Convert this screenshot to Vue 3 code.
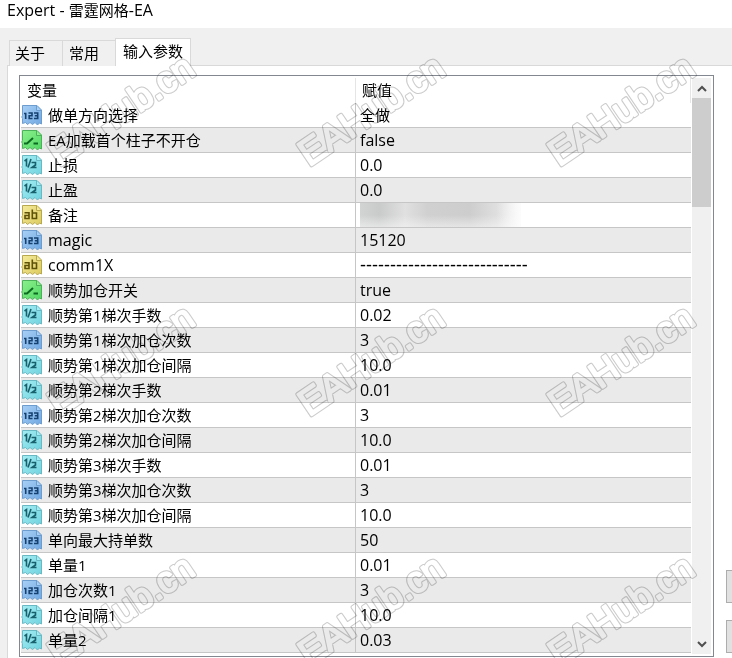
<script setup>
const tabs = ['关于', '常用', '输入参数']
const active = '输入参数'

const rows = [
  ['int', '做单方向选择', '全做'],
  ['bool', 'EA加载首个柱子不开仓', 'false'],
  ['real', '止损', '0.0'],
  ['real', '止盈', '0.0'],
  ['text', '备注', null],
  ['int', 'magic', '15120'],
  ['text', 'comm1X', '----------------------------'],
  ['bool', '顺势加仓开关', 'true'],
  ['real', '顺势第1梯次手数', '0.02'],
  ['int', '顺势第1梯次加仓次数', '3'],
  ['real', '顺势第1梯次加仓间隔', '10.0'],
  ['real', '顺势第2梯次手数', '0.01'],
  ['int', '顺势第2梯次加仓次数', '3'],
  ['real', '顺势第2梯次加仓间隔', '10.0'],
  ['real', '顺势第3梯次手数', '0.01'],
  ['int', '顺势第3梯次加仓次数', '3'],
  ['real', '顺势第3梯次加仓间隔', '10.0'],
  ['int', '单向最大持单数', '50'],
  ['real', '单量1', '0.01'],
  ['int', '加仓次数1', '3'],
  ['real', '加仓间隔1', '10.0'],
  ['real', '单量2', '0.03'],
].map(([type, name, value]) => ({ type, name, value }))

const palette = {
  int: { light: '#a9d0f5', dark: '#6fa8e3', edge: '#6d9dce', ink: '#15406f' },
  bool: { light: '#8df08d', dark: '#4fd763', edge: '#4bb25a', ink: '#0b6a20' },
  real: { light: '#a5edf3', dark: '#6fd3df', edge: '#68b9c4', ink: '#17606c' },
  text: { light: '#f4ea9c', dark: '#dccb5c', edge: '#b9a94e', ink: '#5e5208' },
}

const isLatin = (s) => s !== null && /^[\x20-\x7e]+$/.test(s)
const isRule = (s) => s !== null && /^-+$/.test(s)

const marks = []
for (const y of [167, 417, 667]) for (const x of [59, 309, 559]) marks.push({ x, y })
</script>

<template>
  <div class="window">
    <header class="title"><span class="latin">Expert - </span>雷霆网格<span class="latin">-EA</span></header>

    <nav class="tabs" role="tablist">
      <button
        v-for="t in tabs"
        :key="t"
        type="button"
        role="tab"
        class="tab"
        :class="{ active: t === active }"
        :aria-selected="t === active"
      >{{ t }}</button>
    </nav>

    <main class="page">
      <section class="list">
        <table>
          <thead>
            <tr><th>变量</th><th>赋值</th></tr>
          </thead>
          <tbody>
            <tr v-for="r in rows" :key="r.name">
              <td>
                <div class="name">
                  <svg class="icon" viewBox="0 0 22 22" aria-hidden="true">
                    <defs>
                      <linearGradient :id="'g-' + r.type" x1="0" y1="0" x2="1" y2="1">
                        <stop offset="0" :stop-color="palette[r.type].light" />
                        <stop offset="1" :stop-color="palette[r.type].dark" />
                      </linearGradient>
                    </defs>
                    <path
                      d="M1.5 1.5H16L20.5 6V20L18.500 19L16.500 21L14 18.500L11.500 20.500L9 18.500L6.500 20.500L4.500 18.500L1.500 19.500V14.500L.8 13L1.500 11.500Z"
                      :fill="`url(#g-${r.type})`"
                      :stroke="palette[r.type].edge"
                    />
                    <path d="M15.500 2V6.500H20" :fill="palette[r.type].light" :stroke="palette[r.type].edge" />
                    <g fill="none" :stroke="palette[r.type].ink" stroke-width="1.600">
                      <path v-if="r.type === 'bool'" d="M3 14.500H6L12 9M12.500 14.500H17" stroke-width="2" />
                      <path v-if="r.type === 'real'" d="M3.500 7L5.500 5.500V12.500M10 5L7 13.500M10.500 8.500H14.500V11L11 13.500H15.500" />
                      <path v-if="r.type === 'int'" d="M3 9.500H4.700V15M7.500 9H11V11.800H8.200V14.500H11.500M13 9H16.700V14.500H13M13.800 11.800H16.500" />
                      <path v-if="r.type === 'text'" d="M3.500 8.800H8V14.500H4V11.500H8M11.300 5.500V14.500H15.500V9H11.300" />
                    </g>
                  </svg>
                  <span :class="{ latin: isLatin(r.name) }">{{ r.name }}</span>
                </div>
              </td>
              <td>
                <div v-if="r.value === null" class="masked"></div>
                <span v-else :class="{ latin: isLatin(r.value), rule: isRule(r.value) }">{{ r.value }}</span>
              </td>
            </tr>
          </tbody>
        </table>

        <div class="scroll">
          <button type="button" class="arrow" aria-label="向上滚动">
            <svg viewBox="0 0 10 7" aria-hidden="true"><path d="M1 6L5 2L9 6" /></svg>
          </button>
          <div class="track"><div class="thumb"></div></div>
          <button type="button" class="arrow" aria-label="向下滚动">
            <svg viewBox="0 0 10 7" aria-hidden="true"><path d="M1 1L5 5L9 1" /></svg>
          </button>
        </div>
      </section>

      <aside class="side">
        <button type="button" class="action" aria-label="加载"></button>
        <button type="button" class="action" aria-label="保存"></button>
      </aside>
    </main>

    <svg class="watermark" aria-hidden="true">
      <defs>
        <mask id="outline" maskUnits="userSpaceOnUse" x="0" y="0" width="100%" height="100%">
          <g v-for="(m, i) in marks" :key="i" :transform="`translate(${m.x} ${m.y}) rotate(-34)`">
            <text class="mark outer">EAHub.cn</text>
            <text class="mark inner">EAHub.cn</text>
          </g>
        </mask>
      </defs>
      <rect width="100%" height="100%" mask="url(#outline)" />
    </svg>
  </div>
</template>

<style>
body {
  margin: 0;
}
</style>

<style scoped>
.window {
  position: relative;
  display: flex;
  flex-direction: column;
  height: 100vh;
  overflow: hidden;
  background: #f0f0f0;
  color: #000;
  font-family: "Open Sans", "Noto Sans CJK SC", sans-serif;
  font-size: 15px;
  line-height: 24px;
}
button {
  margin: 0;
  padding: 0;
  border: 0;
  font: inherit;
  color: inherit;
}
.title {
  flex: none;
  height: 28px;
  padding-left: 7px;
  background: #fff;
  line-height: 20px;
  white-space: pre;
}
.tabs {
  position: relative;
  z-index: 1;
  flex: none;
  display: flex;
  align-items: flex-end;
  height: 38px;
  padding-left: 9px;
}
.tab {
  box-sizing: border-box;
  height: 26px;
  padding: 0 17px 2px 5px;
  border: 1px solid #d9d9d9;
  border-right: 0;
  border-bottom: 0;
  background: #f0f0f0;
  line-height: 22px;
}
.tab + .tab {
  padding-left: 6px;
  padding-right: 16px;
}
.tab.active {
  height: 28px;
  padding: 0 7px 4px;
  border-right: 1px solid #d9d9d9;
  background: #fff;
}
.page {
  flex: 1;
  display: flex;
  align-items: flex-start;
  margin: -1px 0 0 7px;
  padding: 9px 0 0 11px;
  border-top: 1px solid #d9d9d9;
  border-left: 1px solid #d9d9d9;
  background: #fff;
}
.list {
  flex: 1;
  display: flex;
  padding: 2px 2px 2px 1px;
  border: 1px solid #828790;
}
table {
  flex: 1;
  table-layout: fixed;
  border-collapse: separate;
  border-spacing: 0;
  margin-bottom: 1px;
}
th,
td {
  box-sizing: border-box;
  width: 50%;
  height: 25px;
  padding: 0 0 0 4px;
  font-weight: 400;
  text-align: left;
  white-space: nowrap;
}
th {
  padding-left: 6px;
  padding-bottom: 1px;
  border-right: 1px solid #e5e5e5;
}
td {
  border-bottom: 1px solid #c6c6c6;
}
td:first-child {
  padding-left: 0;
  border-right: 1px solid #c6c6c6;
}
tbody tr:nth-child(even) {
  background: #eaeaea;
}
.name {
  display: flex;
  align-items: center;
  gap: 5px;
  height: 24px;
}
.icon {
  flex: none;
  width: 22px;
  height: 22px;
}
.latin {
  font-size: 16px;
}
.rule {
  font-family: "Liberation Sans", sans-serif;
  font-size: 18px;
}
.masked {
  width: 161px;
  height: 24px;
  background:
    linear-gradient(90deg, transparent 85%, rgba(255, 255, 255, 0.8)),
    linear-gradient(180deg, transparent 50%, rgba(245, 245, 245, 0.6)),
    linear-gradient(90deg, #d2d4d3, #c9cbca 12%, #dfe0df 28%, #d0d0d0 42%, #cdcdcd 68%, #e2e2e2 88%, #f0f0f0);
}
.scroll {
  flex: none;
  display: flex;
  flex-direction: column;
  width: 19px;
  margin-left: 1px;
  background: #f0f0f0;
}
.arrow {
  flex: none;
  display: grid;
  place-items: center;
  height: 20px;
  background: #f0f0f0;
}
.arrow svg {
  width: 10px;
  height: 7px;
}
.arrow path {
  fill: none;
  stroke: #505050;
  stroke-width: 2;
}
.track {
  flex: 1;
}
.thumb {
  height: 20.4%;
  background: #cdcdcd;
}
.side {
  flex: none;
  align-self: flex-start;
  display: flex;
  flex-direction: column;
  gap: 17px;
  width: 6px;
  margin-left: 12px;
  padding-top: 495px;
  overflow: hidden;
}
.action {
  box-sizing: border-box;
  width: 90px;
  height: 33px;
  border: 1px solid #adadad;
  background: #e1e1e1;
}
.watermark {
  position: absolute;
  z-index: 2;
  inset: 0;
  width: 100%;
  height: 100%;
  pointer-events: none;
  mix-blend-mode: multiply;
}
.watermark rect {
  fill: #cacaca;
}
.mark {
  font-family: "Liberation Sans", sans-serif;
  font-size: 37px;
  stroke-linejoin: round;
}
.outer {
  fill: #fff;
  stroke: #fff;
  stroke-width: 4px;
}
.inner {
  fill: #000;
  stroke: #000;
  stroke-width: 2px;
}
</style>
